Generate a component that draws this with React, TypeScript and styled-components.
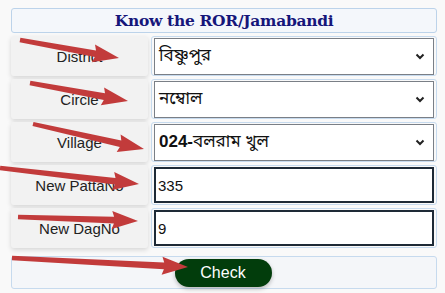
import styled, { createGlobalStyle } from 'styled-components';

const Global = createGlobalStyle`
	html, body {
		margin: 0;
		padding: 0;
		background: #f9f9f9;
	}
	body {
		font-family: "Liberation Sans", Arial, "Noto Sans Bengali", "Noto Sans", sans-serif;
	}
`;

const Page = styled.div`
	position: relative;
	width: 445px;
	height: 293px;
	padding: 8px 8px 0 11px;
	box-sizing: border-box;
	overflow: hidden;
`;

const Title = styled.div`
	height: 25px;
	box-sizing: border-box;
	border: 1px solid #bcd3ea;
	border-radius: 3px;
	background: #f4f7fb;
	display: flex;
	align-items: center;
	justify-content: center;
	font-family: "DejaVu Serif", "Liberation Serif", serif;
	font-weight: bold;
	font-size: 15.5px;
	letter-spacing: -0.3px;
	color: #16167a;
`;

const Form = styled.div`
	display: grid;
	grid-template-columns: 137px 1fr;
	grid-auto-rows: 40px;
	column-gap: 3px;
	row-gap: 3px;
	margin-top: 3px;
`;

const Label = styled.div`
	background: #f2f2f2;
	border-radius: 3px;
	box-shadow: 0 2px 5px rgba(0, 0, 0, 0.14);
	display: flex;
	align-items: center;
	justify-content: center;
	font-size: 15px;
	color: #222;
`;

const Cell = styled.div`
	border: 1px solid #c6daee;
	border-radius: 3px;
	padding: 1px 2px;
	display: flex;
	align-items: center;
`;

const Select = styled.div`
	flex: 1;
	height: 37px;
	box-sizing: border-box;
	border: 1px solid #7a7f86;
	background: #fff;
	display: flex;
	align-items: center;
	padding: 0 8px 0 4px;
	font-size: 17px;
	color: #111;
	font-family: "Liberation Sans", "Noto Sans Bengali", "Noto Sans", sans-serif;
	b {
		font-weight: bold;
	}
`;

const SelectText = styled.span`
	flex: 1;
`;

const Input = styled.div`
	flex: 1;
	height: 36px;
	box-sizing: border-box;
	border: 2px solid #1e2a36;
	background: #fff;
	display: flex;
	align-items: center;
	padding-left: 2px;
	font-size: 15px;
	color: #111;
`;

const Footer = styled.div`
	margin-top: 8px;
	height: 33px;
	box-sizing: border-box;
	border: 1px solid #c6daee;
	border-radius: 3px;
	background: #f4f6f9;
	display: flex;
	align-items: center;
	justify-content: center;
	padding-right: 2px;
`;

const Button = styled.button`
	width: 97px;
	height: 28px;
	border: none;
	border-radius: 14px;
	background: #023d0c;
	color: #fff;
	font-family: "Liberation Sans", Arial, sans-serif;
	font-size: 16px;
	box-shadow: 0 2px 4px rgba(0, 0, 0, 0.25);
	padding: 0;
`;

const Overlay = styled.svg`
	position: absolute;
	left: 0;
	top: 0;
	pointer-events: none;
`;

function Chevron() {
	return (
		<svg width="10" height="7" viewBox="0 0 10 7">
			<path d="M1.5 1.5 L5 5 L8.5 1.5" fill="none" stroke="#222" strokeWidth="2" />
		</svg>
	);
}

type Arrow = { x1: number; y1: number; x2: number; y2: number };

const arrows: Arrow[] = [
	{ x1: 20, y1: 40, x2: 119, y2: 58 },
	{ x1: 30, y1: 83, x2: 128, y2: 101 },
	{ x1: 33, y1: 124, x2: 144, y2: 149 },
	{ x1: 0, y1: 168, x2: 139, y2: 184 },
	{ x1: 18, y1: 217, x2: 138, y2: 221 },
	{ x1: 12, y1: 258, x2: 188, y2: 267 },
];

function arrowPath({ x1, y1, x2, y2 }: Arrow) {
	const dx = x2 - x1;
	const dy = y2 - y1;
	const len = Math.hypot(dx, dy);
	const ux = dx / len;
	const uy = dy / len;
	const nx = -uy;
	const ny = ux;
	const head = 24;
	const hw = 9;
	const bx = x2 - ux * head;
	const by = y2 - uy * head;
	const w0 = 2.2;
	const w1 = 3.4;
	const pts = [
		[x1 + nx * w0, y1 + ny * w0],
		[bx + nx * w1, by + ny * w1],
		[bx + nx * hw - ux * 2, by + ny * hw - uy * 2],
		[x2, y2],
		[bx - nx * hw - ux * 2, by - ny * hw - uy * 2],
		[bx - nx * w1, by - ny * w1],
		[x1 - nx * w0, y1 - ny * w0],
	];
	return pts.map((p) => p.map((v) => v.toFixed(1)).join(',')).join(' ');
}

const rows = [
	{ label: 'District', kind: 'select', value: 'বিষ্ণুপুর' },
	{ label: 'Circle', kind: 'select', value: 'নম্বোল' },
	{ label: 'Village', kind: 'select', prefix: '024-', value: 'বলরাম খুল' },
	{ label: 'New PattaNo', kind: 'input', value: '335' },
	{ label: 'New DagNo', kind: 'input', value: '9' },
];

export default function App() {
	return (
		<>
			<Global />
			<Page>
				<Title>Know the ROR/Jamabandi</Title>
				<Form>
					{rows.flatMap((r) => [
						<Label key={r.label + 'l'}>{r.label}</Label>,
						<Cell key={r.label + 'c'}>
							{r.kind === 'select' ? (
								<Select>
									<SelectText>
										{r.prefix && <b>{r.prefix}</b>}
										{r.value}
									</SelectText>
									<Chevron />
								</Select>
							) : (
								<Input>{r.value}</Input>
							)}
						</Cell>,
					])}
				</Form>
				<Footer>
					<Button>Check</Button>
				</Footer>
				<Overlay width="445" height="293" viewBox="0 0 445 293">
					{arrows.map((a, i) => (
						<polygon key={i} points={arrowPath(a)} fill="#c23b3b" />
					))}
				</Overlay>
			</Page>
		</>
	);
}
